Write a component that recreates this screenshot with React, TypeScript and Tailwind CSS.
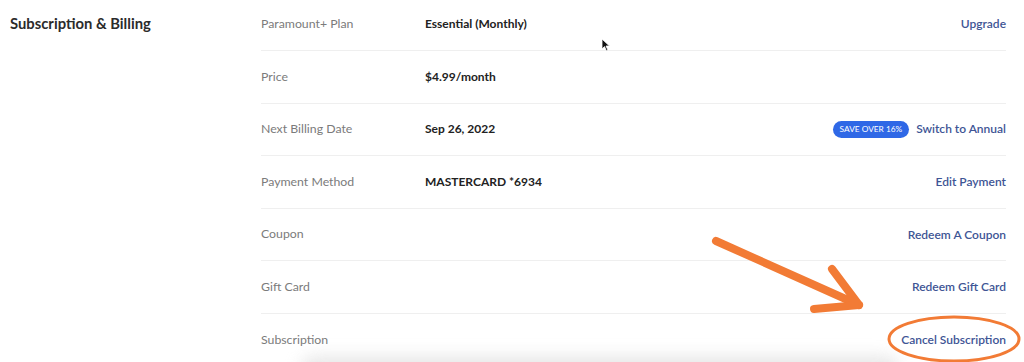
import React from "react";

type Row = {
  label: string;
  value?: string;
  action: string;
  badge?: string;
};

const rows: Row[] = [
  { label: "Paramount+ Plan", value: "Essential (Monthly)", action: "Upgrade" },
  { label: "Price", value: "$4.99/month", action: "" },
  { label: "Next Billing Date", value: "Sep 26, 2022", action: "Switch to Annual", badge: "SAVE OVER 16%" },
  { label: "Payment Method", value: "MASTERCARD *6934", action: "Edit Payment" },
  { label: "Coupon", action: "Redeem A Coupon" },
  { label: "Gift Card", action: "Redeem Gift Card" },
  { label: "Subscription", action: "Cancel Subscription" },
];

export default function App() {
  return (
    <div className="relative w-[1024px] h-[362px] overflow-hidden bg-white font-['Lato',sans-serif]">
      <div className="flex">
        {/* section title */}
        <div className="w-[261px] shrink-0 pl-[10px] pt-[13px]">
          <h2 className="text-[14.8px] font-bold text-[#2b2b2b] leading-[20px]">Subscription &amp; Billing</h2>
        </div>

        {/* detail rows */}
        <div className="flex-1 pr-[18px] mt-[-1.5px]">
          {rows.map((row, i) => (
            <div
              key={row.label}
              className={
                "flex items-center h-[52.6px] " +
                (i < rows.length - 1 ? "border-b border-[#efefef]" : "")
              }
            >
              <div className="w-[164px] shrink-0 text-[12.3px] text-[#7b7b7b]">{row.label}</div>
              <div className="flex-1 text-[12px] font-bold text-[#222]">{row.value}</div>
              <div className="flex items-center gap-[7px]">
                {row.badge && (
                  <span className="rounded-full bg-[#2f68e6] px-[7px] h-[17px] flex items-center text-[8.3px] text-white">
                    {row.badge}
                  </span>
                )}
                {row.action && (
                  <a className="text-[12px] font-semibold text-[#3e5595]">{row.action}</a>
                )}
              </div>
            </div>
          ))}
        </div>
      </div>

      {/* blurred shadow of a panel below */}
      <div className="absolute left-[300px] top-[356px] w-[600px] h-[30px] rounded-[40px] bg-[#d8d8d8] blur-[8px] opacity-60" />

      {/* mouse cursor */}
      <svg className="absolute left-[601px] top-[38px]" width="10" height="14" viewBox="0 0 10 14">
        <path d="M1 1 L1 11 L3.5 8.6 L5.5 13 L7 12.3 L5 8 L8.5 8 Z" fill="#111" stroke="#fff" strokeWidth="0.8" />
      </svg>

      {/* annotation: arrow and circle */}
      <svg className="absolute left-0 top-0 pointer-events-none" width="1024" height="362" viewBox="0 0 1024 362">
        <g stroke="#f27b35" strokeLinecap="round" strokeLinejoin="round" fill="none">
          <path d="M716 241 L859 305" strokeWidth="8" />
          <path d="M832 269 L859 305 L814 309" strokeWidth="8" />
          <ellipse cx="954" cy="339" rx="65" ry="22" strokeWidth="3" />
        </g>
      </svg>
    </div>
  );
}
